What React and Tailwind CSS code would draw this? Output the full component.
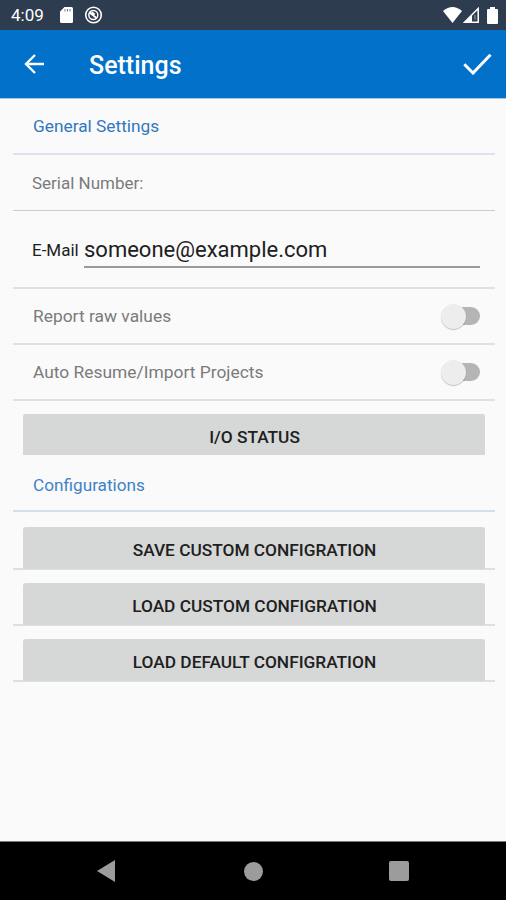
function StatusBar() {
  return (
    <header className="flex h-[30px] shrink-0 items-center bg-[#2d3c4e] pl-[11px] pr-2 text-white">
      <span className="w-[49px] pt-px text-[17px] leading-none">4:09</span>
      <svg width="13" height="16" viewBox="0 0 13 16" fill="currentColor">
        <path d="M4.5 0H11.5Q13 0 13 1.5V14.5Q13 16 11.5 16H1.5Q0 16 0 14.5V4.5Z" />
        <path d="M5 2v2.5M7.5 2v2.5M10 2v2.5" stroke="#2d3c4e" strokeOpacity="0.7" strokeWidth="1" />
      </svg>
      <svg className="ml-[11px]" width="19" height="18" viewBox="0 0 19 18" fill="none" stroke="currentColor">
        <circle cx="9.5" cy="9" r="7.8" strokeWidth="1.6" />
        <circle cx="9.3" cy="9" r="4.5" strokeWidth="1.5" />
        <path d="M5.5 6.5L12.5 12M7.5 6.2L10.8 8.5" strokeWidth="1.8" />
      </svg>
      <div className="grow" />
      <svg width="19" height="16" viewBox="0 0 19 16" fill="currentColor">
        <path d="M0 4Q9.5-4 19 4L9.5 16Z" />
      </svg>
      <svg className="ml-[1px]" width="16" height="16" viewBox="0 0 16 16" fill="none" stroke="currentColor">
        <path d="M1.5 15.2H15.2V1.5Z" strokeWidth="1.5" />
        <path d="M1 15.5L9 7.5V15.5Z" fill="currentColor" stroke="none" />
        <path d="M12 8V12.5" strokeWidth="1" strokeOpacity="0.5" />
      </svg>
      <svg className="ml-2" width="11" height="17" viewBox="0 0 11 17" fill="currentColor">
        <path d="M3 0H8V2H10Q11 2 11 3V16Q11 17 10 17H1Q0 17 0 16V3Q0 2 1 2H3Z" />
      </svg>
    </header>
  );
}

function AppBar() {
  return (
    <div className="flex h-[69px] shrink-0 items-center border-b border-[#a9c8e8] bg-[#0171c9] pl-6 pr-[14px] text-white">
      <svg width="21" height="20" viewBox="0 0 21 20" fill="none" stroke="currentColor" strokeWidth="2.4">
        <path d="M20 10H2M11 1L2 10L11 19" />
      </svg>
      <h1 className="ml-11 grow pt-0.5 text-[25px] font-medium leading-none">Settings</h1>
      <svg width="29" height="22" viewBox="0 0 29 22" fill="none" stroke="currentColor" strokeWidth="3">
        <path d="M1.3 11.3L10 20L27.5 1.8" />
      </svg>
    </div>
  );
}

function SwitchRow({ label }) {
  return (
    <div className="flex h-14 items-center justify-between border-b-2 border-[#e1e1e2] pl-5 pr-[15px]">
      <span className="pt-[2px] text-[17.4px] leading-none text-[#7b7b7b]">{label}</span>
      <span className="flex h-[18px] w-[34px] items-center rounded-full bg-[#b5b5b5]">
        <span className="-ml-[5px] h-[25px] w-[25px] shrink-0 rounded-full bg-[#ededed] shadow-[0_1px_1px_rgba(0,0,0,0.22)]" />
      </span>
    </div>
  );
}

function ConfigButton({ children }) {
  return (
    <div className="border-b-2 border-[#dedfe1] px-[10px]">
      <button className="-mb-px block h-[42px] w-full rounded-t-[3px] bg-[#d6d8d7] pl-px pt-[5px] text-[17.3px] font-medium leading-none text-[#202020]">
        {children}
      </button>
    </div>
  );
}

export default function App() {
  return (
    <div className="flex h-[900px] w-[506px] flex-col bg-[#fafafa] font-['Roboto',sans-serif]">
      <StatusBar />
      <AppBar />
      <main className="grow pl-[13px] pr-[11px]">
        <h2 className="flex h-14 items-center border-b-2 border-[#dce2f0] pl-5 pt-0.5 text-[17.3px] leading-none text-[#3377bd]">
          General Settings
        </h2>
        <div className="flex h-14 items-center border-b border-[#cccccc] pl-[19px] pt-0.5 text-[17px] leading-none text-[#7b7b7b]">
          Serial Number:
        </div>
        <div className="flex h-[78px] items-center border-b-2 border-[#e1e1e2] pl-[19px] pr-[15px] text-[#202020]">
          <span className="w-[52px] pt-0.5 text-[17px] leading-none">E-Mail</span>
          <div className="flex h-[37px] grow items-center border-b-2 border-[#9a9a9a] pt-[3px] text-[22px] leading-none">
            someone@example.com
          </div>
        </div>
        <SwitchRow label="Report raw values" />
        <SwitchRow label="Auto Resume/Import Projects" />
        <div className="px-[10px] pt-[13px]">
          <button className="block h-[41px] w-full rounded-t-[2px] bg-[#d6d8d7] pl-px pt-1.5 text-[17.3px] font-medium leading-none text-[#202020]">
            I/O STATUS
          </button>
        </div>
        <h2 className="flex h-[57px] items-center border-b-2 border-[#d5deee] pl-5 pt-1.5 text-[17.2px] leading-none text-[#3f82c6]">
          Configurations
        </h2>
        <div className="mt-[15px] flex flex-col gap-[13px]">
          <ConfigButton>SAVE CUSTOM CONFIGRATION</ConfigButton>
          <ConfigButton>LOAD CUSTOM CONFIGRATION</ConfigButton>
          <ConfigButton>LOAD DEFAULT CONFIGRATION</ConfigButton>
        </div>
      </main>
      <nav className="flex h-[59px] shrink-0 items-center border-t border-[#777777] bg-black pl-[97px] text-[#9c9c9c]">
        <svg width="18" height="22" viewBox="0 0 18 22" fill="currentColor">
          <path d="M0 11L18 0V22Z" />
        </svg>
        <span className="ml-[129px] h-[19px] w-[19px] rounded-full bg-[#9c9c9c]" />
        <span className="ml-[126px] h-[20px] w-[20px] rounded-[2px] bg-[#9c9c9c]" />
      </nav>
    </div>
  );
}
